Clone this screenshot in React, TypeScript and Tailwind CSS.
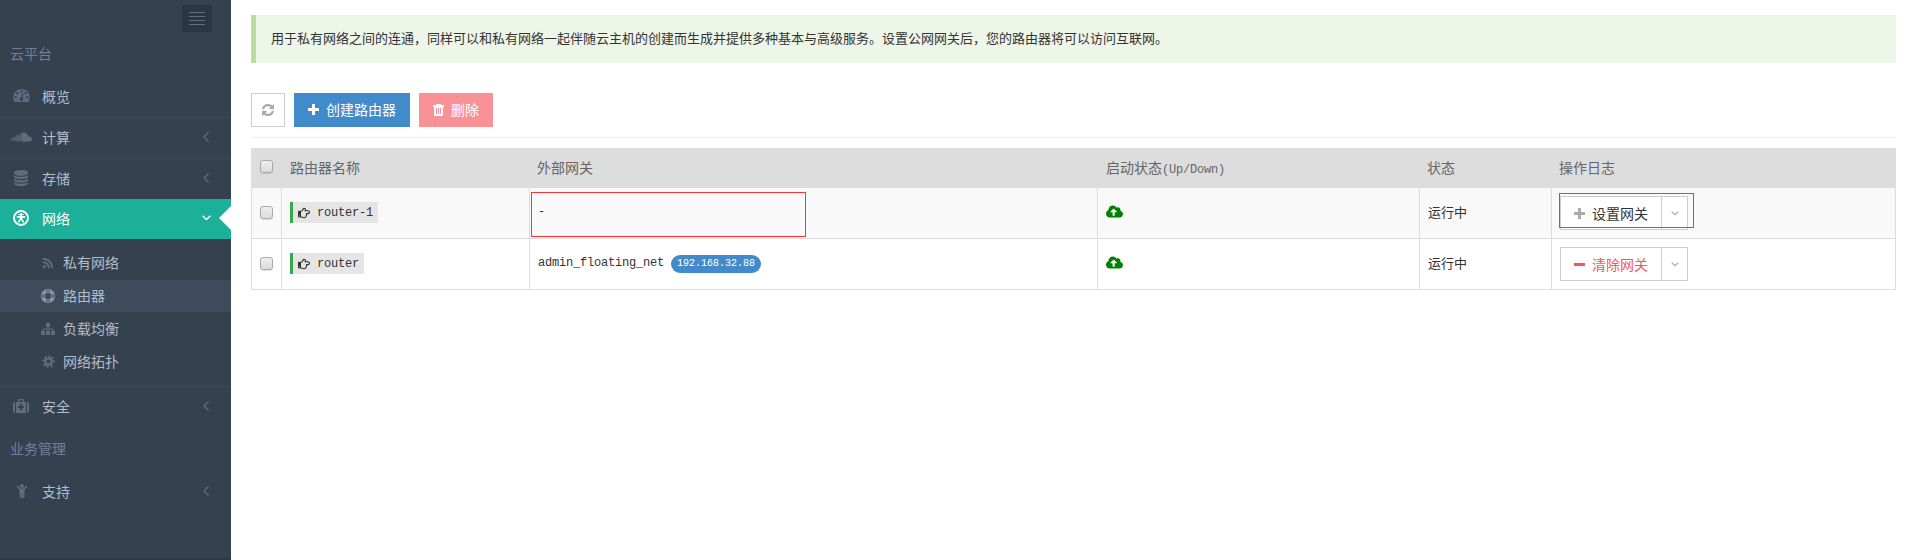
import React from "react";
import { FaSoundcloud, FaChild, FaRss, FaRegHandPointRight, FaCloudUploadAlt } from "react-icons/fa";

type P = { className?: string };

const Dashboard = ({ className }: P) => (
  <svg viewBox="0 256 1792 1408" fill="currentColor" className={className}>
    <path d="M384 1152q0-53-37.5-90.5T256 1024t-90.5 37.5T128 1152t37.5 90.5T256 1280t90.5-37.5T384 1152zm192-448q0-53-37.5-90.5T448 576t-90.5 37.5T320 704t37.5 90.5T448 832t90.5-37.5T576 704zm428 481l101-382q6-26-7.5-48.5T1059 725t-48 6.5-30 39.5l-101 382q-60 5-107 43.5t-63 98.5q-20 77 20 146t117 89 146-20 89-117q16-60-6-117t-72-91zm660-33q0-53-37.5-90.5T1536 1024t-90.5 37.5T1408 1152t37.5 90.5 90.5 37.5 90.5-37.5 37.5-90.5zm-640-640q0-53-37.5-90.5T896 384t-90.5 37.5T768 512t37.5 90.5T896 640t90.5-37.5T1024 512zm448 192q0-53-37.5-90.5T1344 576t-90.5 37.5T1216 704t37.5 90.5T1344 832t90.5-37.5T1472 704zm320 448q0 261-141 483-19 29-54 29H195q-35 0-54-29Q0 1414 0 1152q0-182 71-348t191-286 286-191 348-71 348 71 286 191 191 286 71 348z" />
  </svg>
);
const Database = ({ className }: P) => (
  <svg viewBox="0 0 1536 1792" preserveAspectRatio="none" fill="currentColor" className={className}>
    <path d="M768 768q237 0 443-43t325-127v170q0 69-103 128t-280 93.5-385 34.5-385-34.5-280-93.5-103-128v-170q119 84 325 127t443 43zm0 768q237 0 443-43t325-127v170q0 69-103 128t-280 93.5-385 34.5-385-34.5-280-93.5-103-128v-170q119 84 325 127t443 43zm0-384q237 0 443-43t325-127v170q0 69-103 128t-280 93.5-385 34.5-385-34.5-280-93.5-103-128v-170q119 84 325 127t443 43zM768 0q208 0 385 34.5t280 93.5 103 128v128q0 69-103 128t-280 93.5T768 640t-385-34.5T103 512 0 384V256q0-69 103-128t280-93.5T768 0z" />
  </svg>
);
const Refresh = ({ className }: P) => (
  <svg viewBox="0 0 1536 1536" fill="currentColor" stroke="currentColor" strokeWidth="50" className={className}>
    <path d="M1511 928q0 5-1 7-64 268-268 434.5T764 1536q-146 0-282.5-55T238 1324l-129 129q-19 19-45 19t-45-19-19-45V960q0-26 19-45t45-19h448q26 0 45 19t19 45-19 45l-137 137q71 66 161 102t187 36q134 0 250-65t186-179q11-17 53-117 8-23 30-23h192q13 0 22.5 9.5t9.5 22.5zm25-800v448q0 26-19 45t-45 19h-448q-26 0-45-19t-19-45 19-45l138-138Q969 256 768 256q-134 0-250 65T332 500q-11 17-53 117-8 23-30 23H50q-13 0-22.5-9.5T18 608v-7q65-268 270-434.5T768 0q146 0 284 55.5T1297 212l130-129q19-19 45-19t45 19 19 45z" />
  </svg>
);
const Trash = ({ className }: P) => (
  <svg viewBox="0 0 11 12" fill="currentColor" className={className}>
    <path fillRule="evenodd" d="M3 1q0-1 1-1h3q1 0 1 1h3v2h-1v8q0 1-1 1H2q-1 0-1-1V3H0V1zM3 4v6h1V4zM5 4v6h1V4zM7 4v6h1V4z" />
  </svg>
);
const Globe = ({ className }: P) => (
  <svg viewBox="0 0 16 16" fill="none" stroke="currentColor" className={className}>
    <circle cx="8" cy="8" r="7" strokeWidth="1.9" />
    <path d="M8 3v7" strokeWidth="2" />
    <path d="M3.800 7h8.400" strokeWidth="1.800" />
    <path d="M8 8l-2.600 4.300M8 8l2.600 4.300" strokeWidth="1.500" />
    <path d="M5.300 4.500h5.400" strokeWidth="1" />
  </svg>
);
const Ring = ({ className }: P) => (
  <svg viewBox="0 0 14 14" fill="none" stroke="currentColor" className={className}>
    <circle cx="7" cy="7" r="6.400" strokeWidth="1.100" />
    <circle cx="7" cy="7" r="3.900" strokeWidth="1.100" />
    <g strokeWidth="3">
      <path d="M8.800 2.100A5.200 5.200 0 0 1 11.900 5.200M11.900 8.800A5.200 5.200 0 0 1 8.800 11.900M5.200 11.900A5.200 5.200 0 0 1 2.100 8.800M2.100 5.200A5.200 5.200 0 0 1 5.200 2.100" />
    </g>
  </svg>
);
const Sitemap = ({ className }: P) => (
  <svg viewBox="0 0 14 12" fill="currentColor" className={className}>
    <path d="M5 0h4v4H7.500v1.500H12q.5 0 .5.500v2H14v4h-4V8h1.500V6.500h-4V8H9v4H5V8h1.500V6.500h-4V8H4v4H0V8h1.500V6q0-.5.5-.5h4.500V4H5z" />
  </svg>
);
const Medkit = ({ className }: P) => (
  <svg viewBox="0 0 16 14" fill="currentColor" className={className}>
    <path fillRule="evenodd" d="M5 3V.8Q5 0 5.800 0h4.400Q11 0 11 .8V3h2v11H3V3zM6.200 3h3.600V1.200H6.200zM7 5v2H5v2h2v2h2V9h2V7H9V5z" />
    <path d="M2 3v11Q0 14 0 12V5Q0 3 2 3zM14 3v11q2 0 2-2V5q0-2-2-2z" />
  </svg>
);
const Pinwheel = ({ className }: P) => (
  <svg viewBox="0 0 13 13" fill="none" stroke="currentColor" className={className}>
    <circle cx="6.500" cy="6.500" r="3.200" strokeWidth="2.200" />
    <path d="M4 4.500L3.300.8M8.500 4l3-1.800M9 8.500l.8 3.700M4.500 9l-3 1.600M3.500 5.500L.3 5.300M9.500 6.500l3.400-.2M7 3.500L8 .5M6 9.500l-.6 3.200" strokeWidth="1.800" />
  </svg>
);
const Plus = ({ className }: P) => (
  <svg viewBox="0 0 11 11" fill="currentColor" className={className}><path d="M4 0h3v4h4v3H7v4H4V7H0V4h4z" /></svg>
);
const Minus = ({ className }: P) => (
  <svg viewBox="0 0 11 11" fill="currentColor" className={className}><path d="M0 4h11v3H0z" /></svg>
);
const Left = () => (
  <svg viewBox="0 0 6 10" fill="none" stroke="#606c7d" strokeWidth="1.200" className="h-[10px] w-[6px]"><path d="M5.500.5L1 5l4.500 4.500" /></svg>
);
const Down = ({ className }: P) => (
  <svg viewBox="0 0 9 6" fill="none" stroke="currentColor" strokeWidth="1.500" className={className}><path d="M.6.8l3.900 3.700L8.400.8" /></svg>
);

function Item({ icon, label, border, arrow = true }: { icon: React.ReactNode; label: string; border?: boolean; arrow?: boolean }) {
  return (
    <div className={border ? "flex h-[41px] flex-none items-center border-t border-[#3d4957] pr-[22px] pb-[2px]" : "flex h-[41px] flex-none items-center pr-[22px] pb-[2px]"}>
      <span className="flex w-[42px] justify-center text-[#606c7d]">{icon}</span>
      <span className="flex-1 text-sm text-[#b4bcc8]">{label}</span>
      {arrow && <Left />}
    </div>
  );
}

function Sub({ icon, label, active }: { icon: React.ReactNode; label: string; active?: boolean }) {
  return (
    <div className={active ? "mb-px flex h-8 items-center bg-[#3e4b5c] pb-px pl-[38px] text-[#8795a8]" : "mb-px flex h-8 items-center pb-px pl-[38px] text-[#606c7d]"}>
      <span className="flex w-5 justify-center">{icon}</span>
      <span className="mb-px ml-[5px] text-sm text-[#b4bcc8]">{label}</span>
    </div>
  );
}

const Check = () => (
  <span className="block h-[13px] w-[13px] rounded-[3px] border border-[#a9a9a9] bg-linear-to-b from-[#ededed] to-[#dcdcdc] shadow-[0_1px_1px_rgba(0,0,0,0.12)]" />
);

function Row({ name, gateway, action, striped }: { name: string; gateway: React.ReactNode; action: React.ReactNode; striped?: boolean }) {
  return (
    <div className={striped ? "grid h-[51px] grid-cols-[30px_248px_568px_322px_132px_1fr] border-b border-[#ddd] bg-[#f9f9f9]" : "grid h-[51px] grid-cols-[30px_248px_568px_322px_132px_1fr] border-b border-[#ddd]"}>
      <div className="flex items-center border-r border-[#ddd] pb-[2px] pl-2"><Check /></div>
      <div className="flex items-center border-r border-[#ddd] pb-px pl-2">
        <span className="flex h-[21px] items-center border-l-[3px] border-[#35aa47] bg-[#e5e5e5] pr-[5px] pl-[5px] font-[Liberation_Mono,monospace] text-xs tracking-[-0.2px]">
          <FaRegHandPointRight className="mr-[7px] h-3 w-3" />{name}
        </span>
      </div>
      <div className="relative flex items-center border-r border-[#ddd] pb-[2px] pl-2 font-[Liberation_Mono,monospace] text-xs tracking-[-0.2px]">{gateway}</div>
      <div className="flex items-center border-r border-[#ddd] pb-[3px] pl-2"><FaCloudUploadAlt className="h-[17px] w-[17px] text-[#008000]" /></div>
      <div className="flex items-center border-r border-[#ddd] pb-[3px] pl-2 text-[13px]">运行中</div>
      <div className="flex items-center pl-2">{action}</div>
    </div>
  );
}

function Split({ icon, label, danger }: { icon: React.ReactNode; label: string; danger?: boolean }) {
  return (
    <div className="flex h-[34px] w-[128px] border border-[#ccc] bg-white">
      <div className="flex flex-1 items-center border-r border-[#ccc] pl-[13px]">
        {icon}
        <span className={danger ? "mb-px ml-[7px] text-sm text-[#f3565d]" : "mb-px ml-[7px] text-sm text-[#333]"}>{label}</span>
      </div>
      <div className="flex w-[25px] items-center justify-center text-[#aaa]"><Down className="h-[5px] w-2" /></div>
    </div>
  );
}

export default function App() {
  return (
    <div className="flex h-[560px] w-[1916px] overflow-hidden bg-white font-['Noto_Sans_CJK_SC',sans-serif] text-[#333]">
      <aside className="flex w-[231px] flex-none flex-col border-b-2 border-[#303a47] bg-[#364150]">
        <div className="flex h-8 flex-none justify-end pt-[5px] pr-[19px]">
          <div className="flex h-[27px] w-[30px] flex-col items-center justify-center gap-[3px] bg-[#2b3643]">
            <i className="h-px w-4 bg-[#606c7d]" /><i className="h-px w-4 bg-[#606c7d]" /><i className="h-px w-4 bg-[#606c7d]" /><i className="h-px w-4 bg-[#606c7d]" />
          </div>
        </div>
        <div className="flex h-11 flex-none items-center pb-[2px] pl-[10px] text-sm text-[#708096]">云平台</div>
        <Item icon={<Dashboard className="h-[13px] w-[17px]" />} label="概览" arrow={false} />
        <Item icon={<FaSoundcloud className="h-[20px] w-[21px]" />} label="计算" border />
        <Item icon={<Database className="h-4 w-[14px]" />} label="存储" border />
        <div className="flex h-10 flex-none items-center bg-[#1caf9a] text-white">
          <span className="mb-[3px] flex w-[42px] justify-center"><Globe className="h-4 w-4" /></span>
          <span className="mb-[2px] flex-1 text-sm">网络</span>
          <Down className="mr-2 mb-[3px] h-[6px] w-[9px]" />
          <svg viewBox="0 0 12 24" className="mb-[2px] h-6 w-3"><path d="M12 0v24L0 12z" fill="white" /></svg>
        </div>
        <div className="h-[147px] flex-none pt-2">
          <Sub icon={<FaRss className="h-3 w-3" />} label="私有网络" />
          <Sub icon={<Ring className="h-[14px] w-[14px]" />} label="路由器" active />
          <Sub icon={<Sitemap className="h-3 w-[14px]" />} label="负载均衡" />
          <Sub icon={<Pinwheel className="h-[13px] w-[13px]" />} label="网络拓扑" />
        </div>
        <Item icon={<Medkit className="h-[14px] w-4" />} label="安全" border />
        <div className="flex h-11 flex-none items-center pb-[2px] pl-[10px] text-sm text-[#708096]">业务管理</div>
        <Item icon={<FaChild className="ml-px h-[14px] w-3" />} label="支持" />
      </aside>

      <main className="flex w-[1665px] flex-col pt-[15px] pl-5">
        <div className="flex h-12 flex-none items-center border-l-[5px] border-[#bbdba1] bg-[#eef6ea] pb-[3px] pl-[15px] text-[13px]">
          用于私有网络之间的连通，同样可以和私有网络一起伴随云主机的创建而生成并提供多种基本与高级服务。设置公网网关后，您的路由器将可以访问互联网。
        </div>
        <div className="mt-[30px] flex h-[34px] flex-none gap-[9px] text-sm text-white">
          <div className="flex w-[34px] items-center justify-center border border-[#ccc] text-[#aaa]"><Refresh className="h-3 w-3" /></div>
          <div className="flex w-[116px] items-center bg-[#428bca] pb-px pl-[14px]"><Plus className="mr-[7px] h-[11px] w-[11px]" /><span className="mb-px">创建路由器</span></div>
          <div className="flex w-[74px] items-center bg-[#f99297] pl-[14px]"><Trash className="mr-[7px] h-3 w-[11px]" /><span className="mb-[2px]">删除</span></div>
        </div>
        <div className="mt-[10px] h-px flex-none bg-[#eee]" />
        <div className="mt-[10px] border-x border-[#ddd]">
          <div className="grid h-10 grid-cols-[30px_248px_568px_322px_132px_1fr] items-center bg-[#ddd] pb-[2px] text-sm text-[#666]">
            <span className="pb-px pl-2"><Check /></span>
            <span className="pl-2">路由器名称</span>
            <span className="pl-[7px]">外部网关</span>
            <span className="pl-2">启动状态<span className="font-[Liberation_Mono,monospace] text-xs tracking-[-0.2px]">(Up/Down)</span></span>
            <span className="pl-[7px]">状态</span>
            <span className="pl-[7px]">操作日志</span>
          </div>
          <Row
            striped
            name="router-1"
            gateway={<>-<span className="absolute top-1 left-[1px] h-[45px] w-[275px] border border-[#f33]" /></>}
            action={
              <div className="relative">
                <Split icon={<Plus className="h-[11px] w-[11px] text-[#aaa]" />} label="设置网关" />
                <span className="absolute top-[-3px] left-[-1px] h-[35px] w-[135px] border border-[#f33]" />
              </div>
            }
          />
          <Row
            name="router"
            gateway={<>admin_floating_net<span className="mt-[2px] ml-[7px] flex h-[18px] w-[90px] items-center justify-center rounded-[9px] bg-[#428bca] text-[10px] tracking-normal text-white">192.168.32.88</span></>}
            action={<Split danger icon={<Minus className="h-[11px] w-[11px] text-[#f3565d]" />} label="清除网关" />}
          />
        </div>
      </main>
    </div>
  );
}
